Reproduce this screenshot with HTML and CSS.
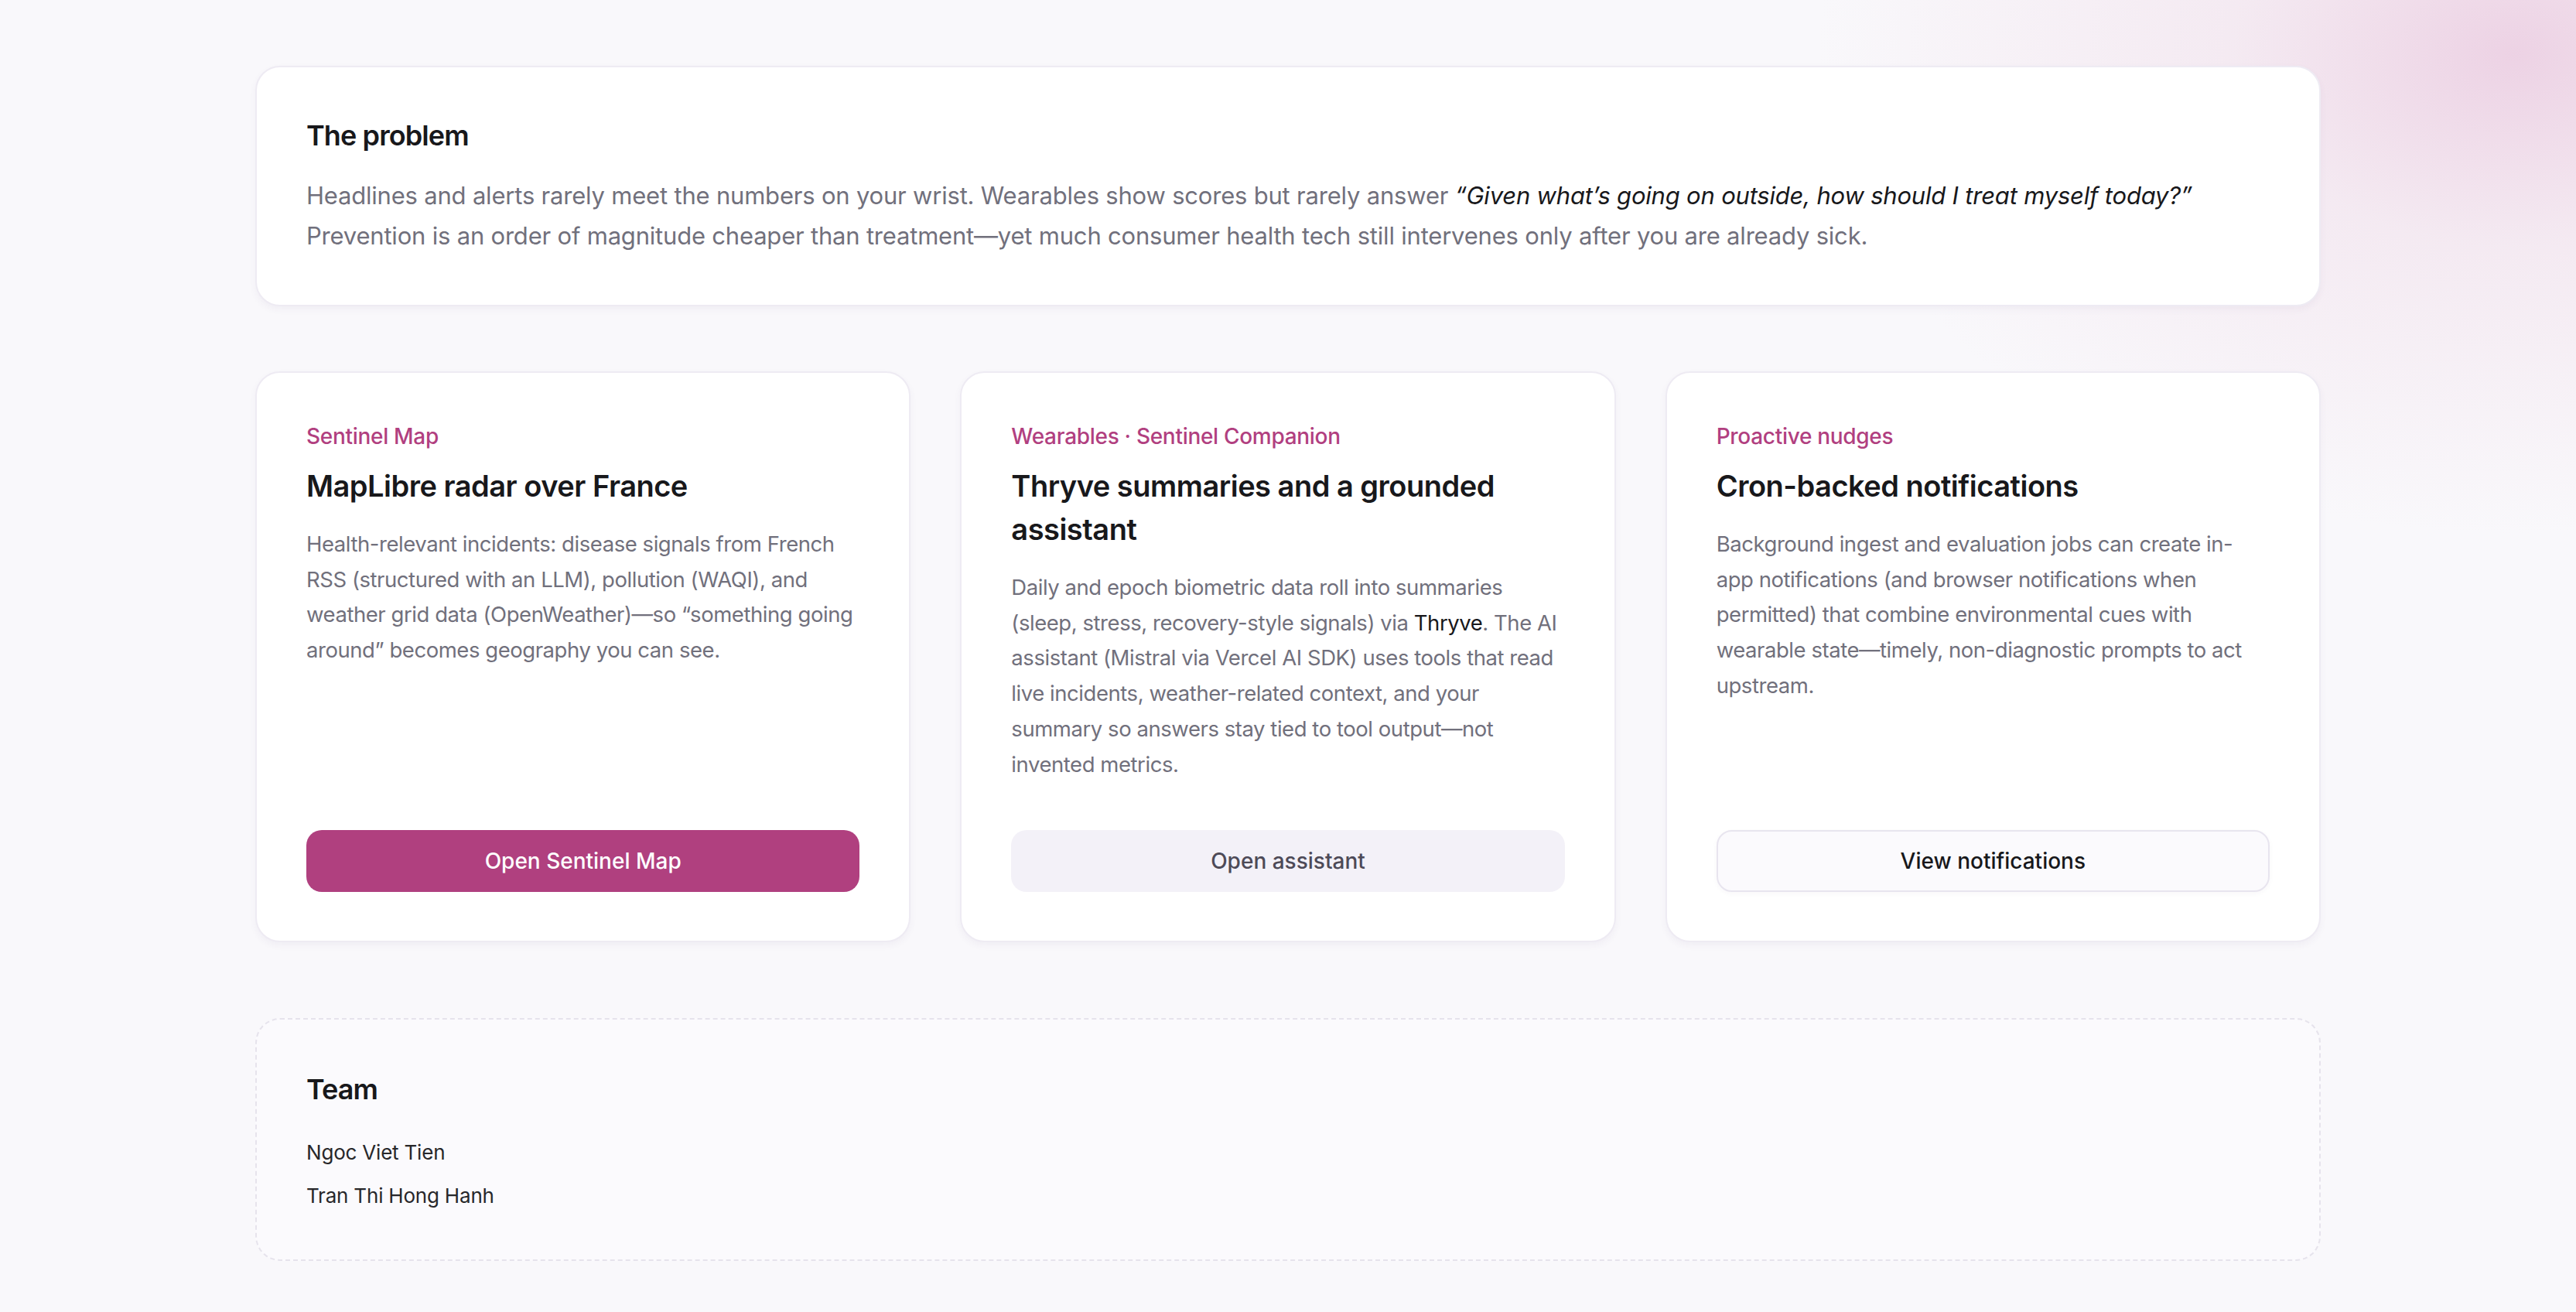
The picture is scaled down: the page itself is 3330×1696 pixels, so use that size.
FILE: index.html
```html
<!DOCTYPE html>
<html lang="en">
<head>
<meta charset="utf-8">
<title>Sentinel</title>
<link rel="stylesheet" href="styles.css">
</head>
<body>
<main class="page">
  <section class="card problem">
    <h2 class="problem-title">The problem</h2>
    <p class="lead">Headlines and alerts rarely meet the numbers on your wrist. Wearables show scores but rarely answer <em class="quote">“Given what’s going on outside, how should I treat myself today?”</em> Prevention is an order of magnitude cheaper than treatment—yet much consumer health tech still intervenes only after you are already sick.</p>
  </section>

  <div class="features">
    <article class="card feature">
      <p class="eyebrow">Sentinel Map</p>
      <h3 class="feature-title">MapLibre radar over France</h3>
      <p class="desc">Health-relevant incidents: disease signals from French<br>RSS (structured with an LLM), pollution (WAQI), and<br>weather grid data (OpenWeather)—so “something going<br>around” becomes geography you can see.</p>
      <a class="btn btn-primary" href="#">Open Sentinel Map</a>
    </article>
    <article class="card feature">
      <p class="eyebrow">Wearables · Sentinel Companion</p>
      <h3 class="feature-title">Thryve summaries and a grounded assistant</h3>
      <p class="desc">Daily and epoch biometric data roll into summaries<br>(sleep, stress, recovery-style signals) via <span class="strong">Thryve</span>. The AI<br>assistant (Mistral via Vercel AI SDK) uses tools that read<br>live incidents, weather-related context, and your<br>summary so answers stay tied to tool output—not<br>invented metrics.</p>
      <a class="btn btn-soft" href="#">Open assistant</a>
    </article>
    <article class="card feature">
      <p class="eyebrow">Proactive nudges</p>
      <h3 class="feature-title">Cron-backed notifications</h3>
      <p class="desc">Background ingest and evaluation jobs can create in-<br>app notifications (and browser notifications when<br>permitted) that combine environmental cues with<br>wearable state—timely, non-diagnostic prompts to act<br>upstream.</p>
      <a class="btn btn-outline" href="#">View notifications</a>
    </article>
  </div>

  <section class="team">
    <h2 class="team-title">Team</h2>
    <ul class="team-list">
      <li>Ngoc Viet Tien</li>
      <li>Tran Thi Hong Hanh</li>
    </ul>
  </section>
</main>
</body>
</html>
```

FILE: styles.css
```css
* { box-sizing: border-box; }

html, body {
  margin: 0;
  padding: 0;
}

body {
  min-height: 1696px;
  background:
    radial-gradient(ellipse 900px 620px at 3250px 70px, rgba(236, 208, 227, 0.95), rgba(240, 222, 234, 0.55) 40%, rgba(249, 248, 251, 0) 100%),
    #f9f8fb;
  background-repeat: no-repeat;
  font-family: Inter, "Noto Sans", sans-serif;
  color: #18181b;
}

.page {
  width: 2670px;
  margin: 0 auto;
  padding-top: 85px;
  padding-bottom: 66px;
}

.card {
  background: #ffffff;
  border: 2px solid #eeebf3;
  border-radius: 32px;
  box-shadow: 0 4px 10px rgba(70, 50, 110, 0.05);
}

.problem {
  padding: 60px 64px 63px;
}

.problem-title {
  margin: 0;
  font-size: 36px;
  line-height: 56px;
  font-weight: 600;
  letter-spacing: -0.9px;
  color: #18181b;
}

.lead {
  margin: 24px 0 0;
  font-size: 31px;
  line-height: 52px;
  letter-spacing: -0.2px;
  color: #71707c;
}

.quote {
  color: #18181b;
}

.features {
  display: grid;
  grid-template-columns: repeat(3, 1fr);
  gap: 64px;
  margin-top: 84px;
}

.feature {
  display: flex;
  flex-direction: column;
  padding: 62px 64px 63px;
}

.eyebrow {
  margin: 0;
  font-size: 28px;
  line-height: 40px;
  font-weight: 500;
  letter-spacing: -0.3px;
  color: #b13f80;
}

.feature-title {
  margin: 16px 0 0;
  font-size: 38px;
  line-height: 56px;
  font-weight: 600;
  letter-spacing: -0.5px;
  color: #18181b;
}

.desc {
  margin: 25px 0 62px;
  font-size: 27.5px;
  line-height: 45.7px;
  letter-spacing: -0.45px;
  color: #71707c;
}

.strong {
  color: #18181b;
}

.btn {
  display: flex;
  align-items: center;
  justify-content: center;
  margin-top: auto;
  height: 80px;
  border-radius: 20px;
  font-size: 28px;
  font-weight: 500;
  text-decoration: none;
}

.btn-primary {
  background: #b0407f;
  color: #ffffff;
}

.btn-soft {
  background: #f3f1f8;
  color: #4d4a57;
}

.btn-outline {
  background: #fbfafd;
  border: 2px solid #e8e5ef;
  color: #18181b;
  box-shadow: 0 2px 6px rgba(70, 50, 110, 0.04);
}

.team {
  margin-top: 98px;
  padding: 62px 64px 62px;
  border: 2px dashed #e6e3ec;
  border-radius: 32px;
  background: #fbfafd;
}

.team-title {
  margin: 0;
  font-size: 36px;
  line-height: 56px;
  font-weight: 600;
  letter-spacing: -0.9px;
  color: #18181b;
}

.team-list {
  list-style: none;
  margin: 34px 0 0;
  padding: 0;
  display: flex;
  flex-direction: column;
  gap: 16px;
}

.team-list li {
  font-size: 26px;
  line-height: 40px;
  letter-spacing: -0.2px;
  color: #27272a;
}
```
